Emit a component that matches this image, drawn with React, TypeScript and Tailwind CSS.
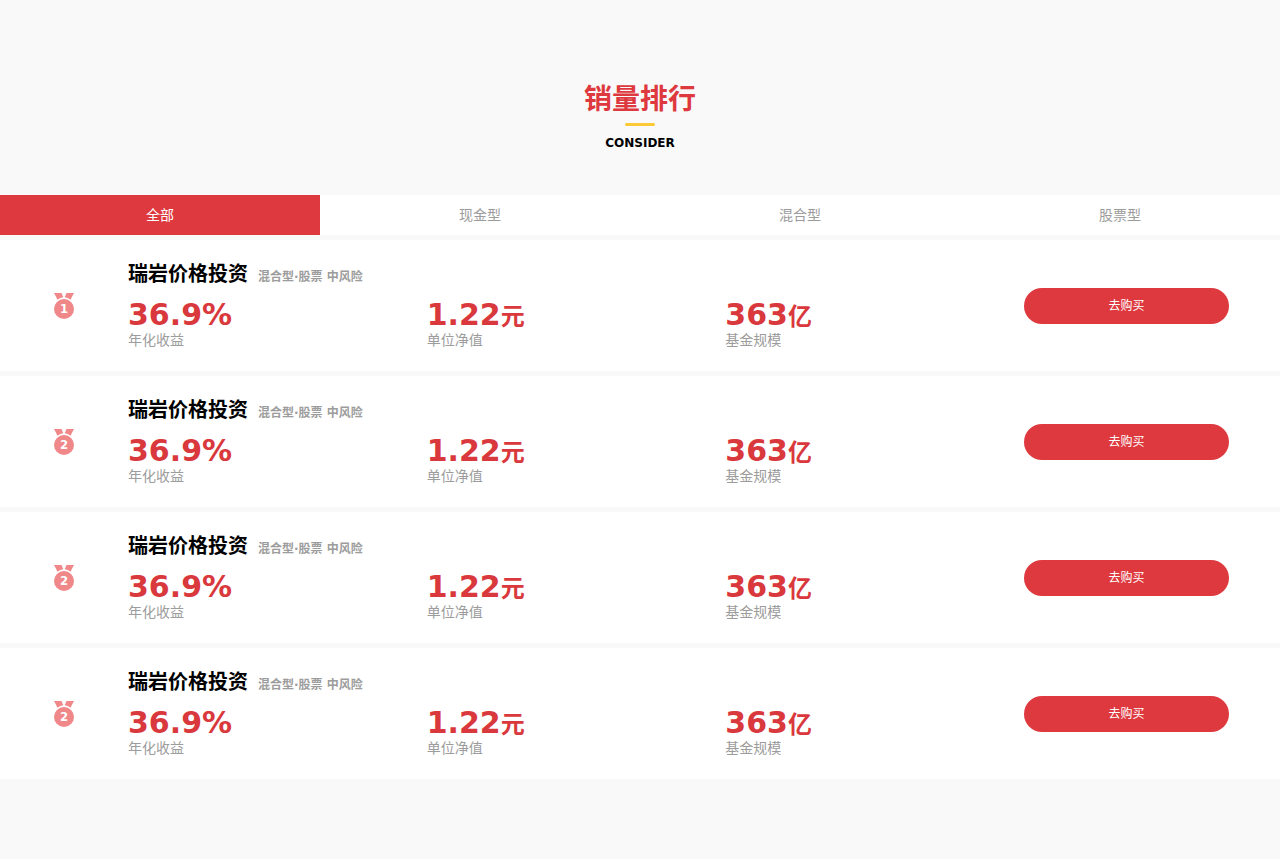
import React, { useState } from 'react';

interface Fund {
  id: number;
  rank: number;
  name: string;
  tags: string;
  yearRate: string;
  netValue: string;
  scale: string;
}

const tabs = ['全部', '现金型', '混合型', '股票型'];

const funds: Fund[] = [1, 2, 2, 2].map((rank, index) => ({
  id: index,
  rank,
  name: '瑞岩价格投资',
  tags: '混合型·股票 中风险',
  yearRate: '36.9',
  netValue: '1.22',
  scale: '363',
}));

const Medal: React.FC<{ rank: number }> = ({ rank }) => (
  <svg
    className="w-5 h-7 font-['DejaVu_Sans_Condensed','DejaVu_Sans',sans-serif]"
    viewBox="0 0 20 28"
    fill="#f08788"
  >
    <path d="M0 1h7.500l1.800 4.200Q6 5.500 3.600 7.800zM20 1h-7.500l-1.800 4.200Q14 5.500 16.400 7.800z" />
    <circle cx="10" cy="17" r="10" />
    <text x="10" y="21" textAnchor="middle" fontSize="13" fontWeight="bold" fill="#fff">
      {rank}
    </text>
  </svg>
);

const FundRow: React.FC<{ fund: Fund }> = ({ fund }) => (
  <li className="flex items-center bg-white">
    <div className="w-1/10 flex justify-center">
      <Medal rank={fund.rank} />
    </div>
    <div className="w-7/10 pt-5 pb-[22px]">
      <h3 className="flex items-baseline gap-[10px] text-xl leading-7 font-bold text-black">
        {fund.name}
        <span className="text-xs text-[#9c9c9c]">{fund.tags}</span>
      </h3>
      <div className="flex mt-[11px] text-sm leading-[18px] text-[#9c9c9c]">
        <div className="w-1/3">
          <p className="text-[30px] leading-8 font-bold text-[#d9383c]">{fund.yearRate}%</p>
          <p>年化收益</p>
        </div>
        <div className="w-1/3">
          <p className="text-[30px] leading-8 font-bold text-[#d9383c]">
            {fund.netValue}
            <span className="text-2xl/7">元</span>
          </p>
          <p>单位净值</p>
        </div>
        <div className="w-1/3">
          <p className="text-[30px] leading-8 font-bold text-[#d9383c]">
            {fund.scale}
            <span className="text-2xl/7">亿</span>
          </p>
          <p>基金规模</p>
        </div>
      </div>
    </div>
    <div className="w-1/5">
      <button className="w-4/5 h-9 rounded-full bg-[#de393e] text-xs text-white">去购买</button>
    </div>
  </li>
);

export default function App() {
  const [active, setActive] = useState(0);

  return (
    <main className="min-h-screen pt-20 pb-20 bg-[#f9f9f9] font-['DejaVu_Sans','Noto_Sans_CJK_SC',sans-serif]">
      <header className="flex flex-col items-center pb-11">
        <h2 className="text-[28px] leading-10 font-bold text-[#de393e]">销量排行</h2>
        <div className="w-[30px] h-[3px] mt-[3px] rounded-full bg-[#fcc937]" />
        <p className="mt-[9px] text-xs font-bold text-black">CONSIDER</p>
      </header>
      <nav className="flex mb-[5px] bg-white">
        {tabs.map((tab, index) => (
          <button
            key={tab}
            onClick={() => setActive(index)}
            className={`flex-1 h-10 text-sm ${
              index === active ? 'bg-[#de393e] text-white' : 'text-[#9c9c9c]'
            }`}
          >
            {tab}
          </button>
        ))}
      </nav>
      <ul className="flex flex-col gap-[5px]">
        {funds.map((fund) => (
          <FundRow key={fund.id} fund={fund} />
        ))}
      </ul>
    </main>
  );
}
